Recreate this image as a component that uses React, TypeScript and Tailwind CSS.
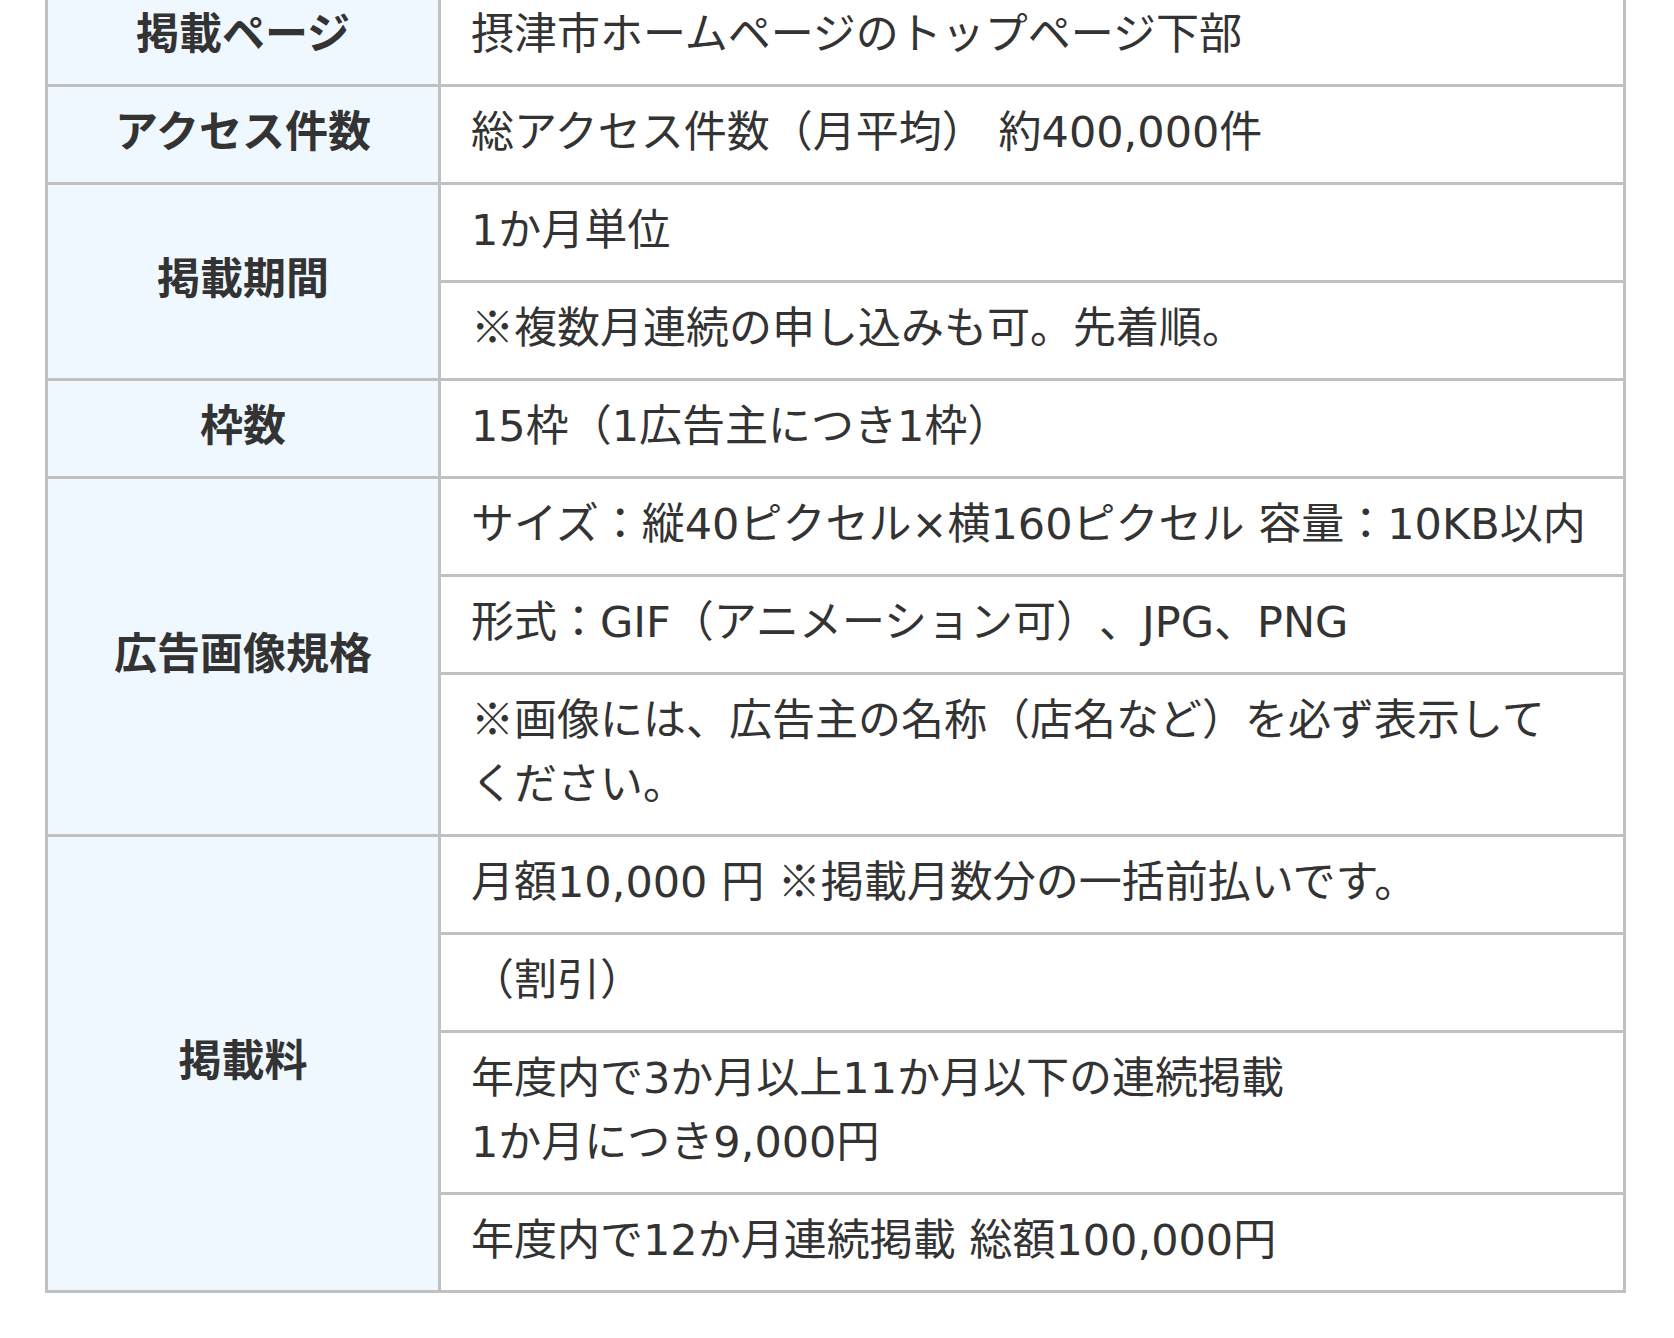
import React from "react";

const th =
  "bg-[#f0f8ff] border-r-[3px] border-b-[3px] border-[#c0c0c0] font-bold text-center align-middle w-[393px] pt-[9px] pb-[22px]";
const td =
  "border-r-[3px] border-b-[3px] border-[#c0c0c0] text-left align-middle pl-[30px] pr-[30px] pt-[9px] pb-[22px] whitespace-nowrap";

function L({ children }: { children: React.ReactNode }) {
  return (
    <span className="leading-none whitespace-pre" style={{ fontFamily: '"DejaVu Sans", sans-serif' }}>
      {children}
    </span>
  );
}

export default function App() {
  return (
    <div
      className="w-[1674px] h-[1338px] overflow-hidden bg-white text-[#333333] text-[43px] leading-[64px] [text-spacing-trim:space-all]"
      style={{ fontFamily: '"Noto Sans CJK JP", "Noto Sans", sans-serif' }}
    >
      <div className="pl-[45px] -mt-[14px]">
        <table className="w-[1581px] border-separate border-spacing-0 border-l-[3px] border-t-[3px] border-[#c0c0c0] table-fixed">
          <colgroup>
            <col className="w-[393px]" />
            <col />
          </colgroup>
          <tbody>
            <tr>
              <th className={th}>掲載ページ</th>
              <td className={td}>摂津市ホームページのトップページ下部</td>
            </tr>
            <tr>
              <th className={th}>アクセス件数</th>
              <td className={td}>
                総アクセス件数（月平均）<L> </L>約<L>400,000</L>件
              </td>
            </tr>
            <tr>
              <th className={th} rowSpan={2}>
                掲載期間
              </th>
              <td className={td}>
                <L>1</L>か月単位
              </td>
            </tr>
            <tr>
              <td className={td}>※複数月連続の申し込みも可。先着順。</td>
            </tr>
            <tr>
              <th className={th}>枠数</th>
              <td className={td}>
                <L>15</L>枠（<L>1</L>広告主につき<L>1</L>枠）
              </td>
            </tr>
            <tr>
              <th className={th} rowSpan={3}>
                広告画像規格
              </th>
              <td className={td}>
                サイズ：縦<L>40</L>ピクセル<L>×</L>横<L>160</L>ピクセル<L> </L>容量：<L>10KB</L>以内
              </td>
            </tr>
            <tr>
              <td className={td}>
                形式：<L>GIF</L>（アニメーション可）、<L>JPG</L>、<L>PNG</L>
              </td>
            </tr>
            <tr>
              <td className={td}>
                ※画像には、広告主の名称（店名など）を必ず表示して
                <br />
                ください。
              </td>
            </tr>
            <tr>
              <th className={th} rowSpan={4}>
                掲載料
              </th>
              <td className={td}>
                月額<L>10,000 </L>円<L> </L>※掲載月数分の一括前払いです。
              </td>
            </tr>
            <tr>
              <td className={td}>（割引）</td>
            </tr>
            <tr>
              <td className={td}>
                年度内で<L>3</L>か月以上<L>11</L>か月以下の連続掲載
                <br />
                <L>1</L>か月につき<L>9,000</L>円
              </td>
            </tr>
            <tr>
              <td className={td}>
                年度内で<L>12</L>か月連続掲載<L> </L>総額<L>100,000</L>円
              </td>
            </tr>
          </tbody>
        </table>
      </div>
    </div>
  );
}
